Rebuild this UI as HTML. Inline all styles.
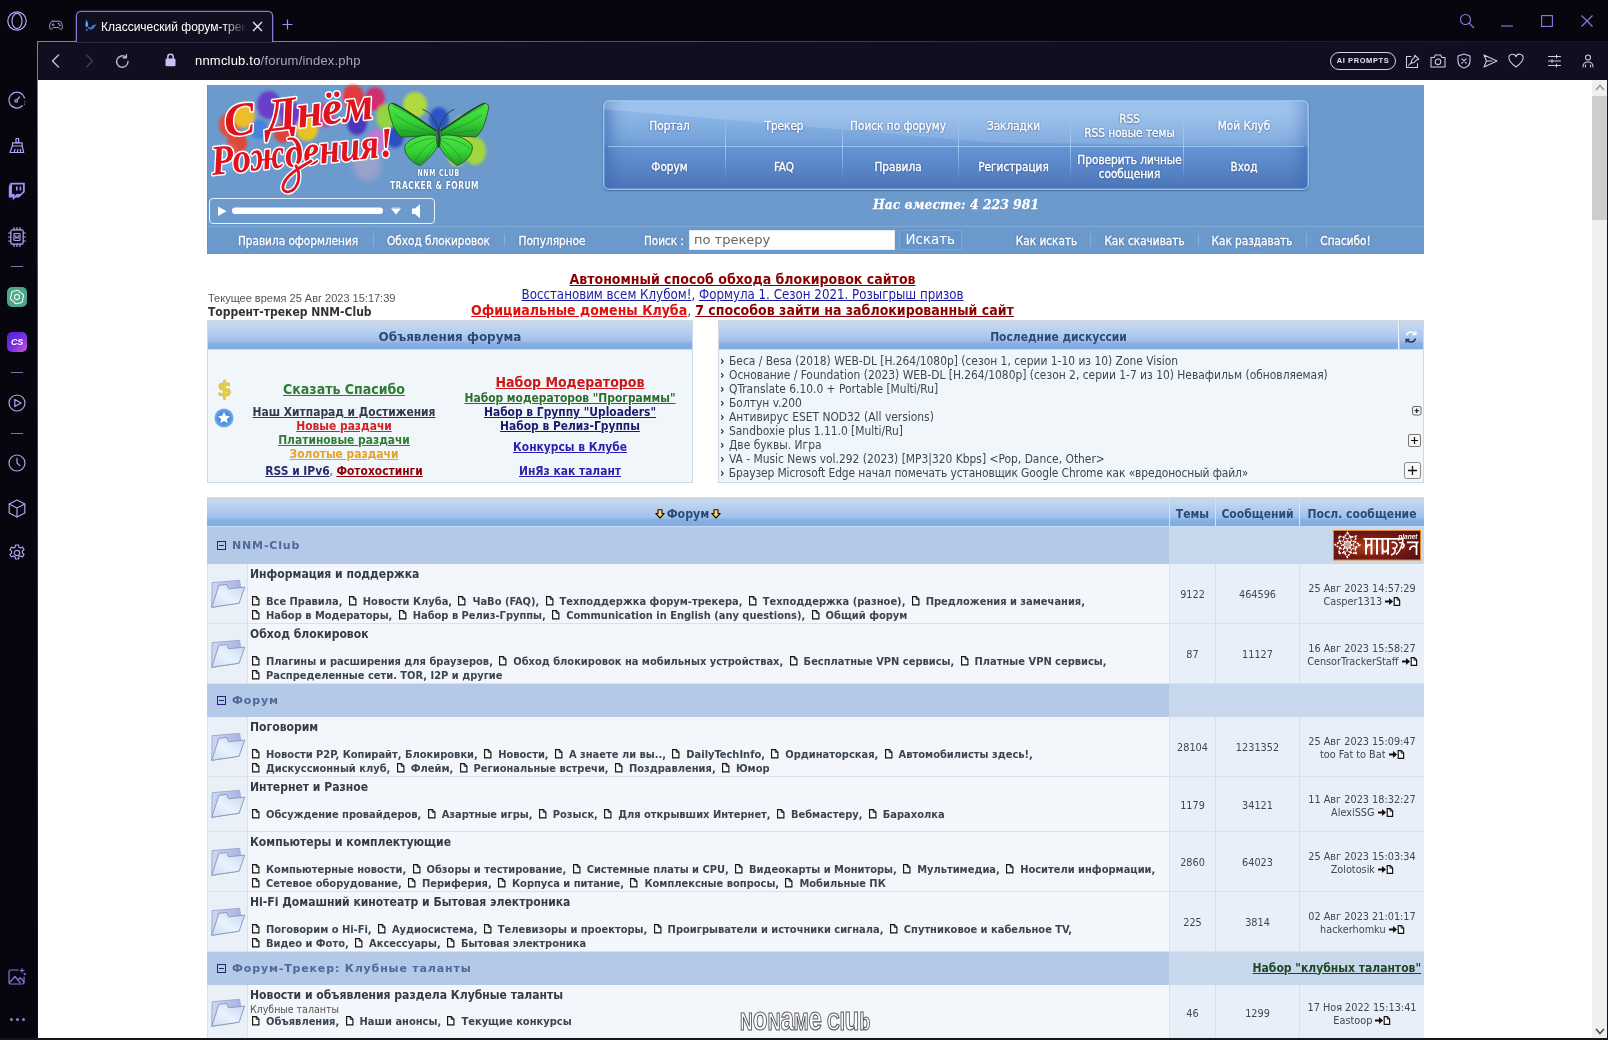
<!DOCTYPE html>
<html lang="ru">
<head>
<meta charset="utf-8">
<title>Классический форум-трекер</title>
<style>
*{box-sizing:border-box;margin:0;padding:0}
html,body{width:1608px;height:1040px;overflow:hidden;background:#fff}
body{position:relative;font-family:"DejaVu Sans Condensed","DejaVu Sans","Liberation Sans",sans-serif;font-size:11px;color:#333}
.abs{position:absolute}
a{text-decoration:underline;color:inherit}
.ver{font-family:"DejaVu Sans","Liberation Sans",sans-serif}
.lib{font-family:"Liberation Sans",sans-serif}
svg{display:block;overflow:visible}
/* ---------- browser chrome ---------- */
#side{left:0;top:0;width:38px;height:1040px;background:#07050e}
#tabbar{left:38px;top:0;width:1570px;height:42px;background:#07050e}
#addr{left:38px;top:42px;width:1570px;height:38px;background:#110e1f}
#tab{left:76px;top:11px;width:197px;height:31px;background:#110e1f;border:1px solid #8876d4;box-shadow:0 0 0 .3px #8876d4;border-bottom:none;border-radius:5px 5px 0 0}
#tabtitle{left:101px;top:19px;width:145px;height:16px;overflow:hidden;white-space:nowrap;color:#fff;font:12px/16px "Liberation Sans",sans-serif;-webkit-mask-image:linear-gradient(90deg,#000 85%,transparent 100%);mask-image:linear-gradient(90deg,#000 85%,transparent 100%)}
#url{left:195px;top:53px;font:13px/16px "Liberation Sans",sans-serif;color:#fff;white-space:nowrap;letter-spacing:.2px}
#url span{color:#a9a4bb}
#aip{left:1330px;top:52px;width:66px;height:18px;border:1px solid #d6cff0;border-radius:9px;color:#e6e0fa;font:bold 7.5px/16px "Liberation Sans",sans-serif;letter-spacing:.6px;text-align:center}
.ic{position:absolute;fill:none;stroke:#b3a2f0;stroke-width:1.2;stroke-linecap:round;stroke-linejoin:round}
.ic2{position:absolute;fill:none;stroke:#d4cbf2;stroke-width:1.05;stroke-linecap:round;stroke-linejoin:round}
.wc{position:absolute;fill:none;stroke:#8f7de6;stroke-width:1.1}
.sep{position:absolute;left:11px;width:12px;height:1px;background:#7d72a8}
#botline{left:0;top:1038px;width:1608px;height:2px;background:#17161c}
#scroll{left:1592px;top:80px;width:16px;height:958px;background:#f0f0f0;border-right:1px solid #15131d}
#thumb{left:1592px;top:96px;width:15px;height:123.500px;background:#cdcdcd}
/* ---------- page header ---------- */
#hdr{left:207px;top:85px;width:1217px;height:169px;border-left:1px solid #6791bf;background:#6c9acc}
#navp{left:603px;top:100px;width:706px;height:90px;border-radius:6px;border:1px solid #93bfee;background:linear-gradient(180deg,#93bdea 0%,#86b2e4 22%,#75a2da 46%,#6592d1 54%,#5986c8 75%,#4d77ba 100%);box-shadow:0 1px 2px rgba(40,70,120,.55),inset 0 0 0 1px rgba(170,205,245,.35),inset 16px 0 16px -10px rgba(62,104,176,.75),inset -16px 0 16px -10px rgba(62,104,176,.75);overflow:hidden}
#navp .gl{position:absolute;left:0;top:0;width:706px;height:46px;background:linear-gradient(180deg,rgba(215,235,252,.26),rgba(200,225,250,.16));clip-path:polygon(0 0,100% 0,100% 100%,55% 90%,0 18%)}
.nv{position:absolute;width:1px;top:14px;height:64px;background:linear-gradient(180deg,rgba(170,205,245,0),rgba(170,205,245,.9) 50%,rgba(150,190,235,0))}
.nh{position:absolute;left:4px;width:696px;top:45px;height:1px;background:rgba(160,200,245,.85)}
.nt{position:absolute;color:#fff;-webkit-text-stroke:.35px #fff;font-size:11.700px;line-height:14px;text-align:center;white-space:nowrap;transform:translate(-50%,-50%);text-shadow:0 0 2px rgba(40,70,130,.9),0 1px 1px rgba(40,70,130,.5)}
#together{left:956px;top:194px;transform:translateX(-50%);white-space:nowrap;color:#fff;font:italic bold 13.800px/20px "DejaVu Serif Condensed","DejaVu Serif","Liberation Serif",serif;text-shadow:0 0 1px #3c64a0;-webkit-text-stroke:.3px #fff}
#player{left:209px;top:198px;width:226px;height:26px;border:1px solid #eaf2fb;border-radius:4px}
#menubar{left:208px;top:226px;width:1216px;height:28px;border-top:1px solid #80abd9;background:#6b99cb}
.mi{position:absolute;top:234px;color:#fff;-webkit-text-stroke:.35px #fff;font-size:11.700px;line-height:14px;white-space:nowrap;transform:translateX(-50%);text-shadow:0 0 2px rgba(40,70,130,.8)}
.ms{position:absolute;top:229px;width:1px;height:22px;background:linear-gradient(180deg,rgba(150,190,235,0),rgba(150,190,235,.8) 50%,rgba(150,190,235,0))}
#sinp{left:689px;top:230px;width:206px;height:20px;background:#fff;border:1px solid #dfe8f3;color:#666;font:13px/17px "DejaVu Sans",sans-serif;padding-left:4px}
#sbtn{left:898.500px;top:230px;width:63.500px;height:20px;border:1px solid #79a6d9;color:#fff;font:13.400px/17px "DejaVu Sans",sans-serif;text-align:center;background:#6794c9}
/* ---------- middle ---------- */
.ctr{position:absolute;white-space:nowrap;transform:translateX(-50%);font-weight:bold}
.bx{position:absolute;background:#f1f6fb;border:1px solid #cfd9e6}
.bh{position:absolute;left:0;top:0;right:0;height:29px;background:linear-gradient(180deg,#cdd9e8 0%,#c0d6ef 20%,#a9c6ee 58%,#a1c0ec 70%,#87b0e3 80%,#81aadf 100%);border-bottom:1px solid #c6ddfb;color:#2b4a78;text-align:center;font:bold 12px/32px "DejaVu Sans",sans-serif}
.dl{position:absolute;left:720px;white-space:nowrap;font-size:11.900px;line-height:14px;color:#3e4852}
.dl b{margin-right:1.200px;color:#2a323a}
.plus{position:absolute;background:linear-gradient(180deg,#fff,#e4e4e4);border:1px solid #555;border-radius:2px;box-shadow:1px 1px 0 #bbb}
.plus:before,.plus:after{content:"";position:absolute;background:#111}
/* ---------- forum table ---------- */
.fh{position:absolute;top:497px;height:29px;background:linear-gradient(180deg,#cdd9e8 0%,#c0d6ef 20%,#a9c6ee 58%,#a1c0ec 70%,#87b0e3 80%,#81aadf 100%);color:#2b4a78;text-align:center;font-weight:bold;font-size:12px;line-height:34px;white-space:nowrap}
.fh .ver{font-size:11px}
.cl{position:absolute;left:207px;width:962px;background:#b4c9e7}
.cr{position:absolute;left:1169px;width:255px;background:#c8d8ec}
.cbx{position:absolute;left:217px;width:9px;height:9px;border:1px solid #23236e}
.cbx:after{content:"";position:absolute;left:1px;top:3px;width:5px;height:1px;background:#23236e}
.ct{position:absolute;left:232px;font-weight:bold;font-size:11px;line-height:15px;letter-spacing:.85px;color:#4d6a99;white-space:nowrap}
.ri{position:absolute;left:208px;width:39px;background:#eaf0f8}
.rf{position:absolute;left:248px;width:921px;background:#f3f6fb}
.rn{position:absolute;background:#e9eff8}
.ft{position:absolute;left:250px;font-weight:bold;font-size:12.050px;line-height:15px;color:#323c46;white-space:nowrap}
.sl{position:absolute;left:252px;font-weight:bold;font-size:11px;line-height:14px;color:#3a4550;white-space:nowrap;word-spacing:0}
.sl a{text-decoration:none}
.pg{display:inline-block;vertical-align:-.5px;margin:0 6.500px 0 2.900px}
.sl .pg:first-child{margin-left:0}
.arr{display:inline-block;vertical-align:-1px}
.num{position:absolute;text-align:center;font-size:10.800px;line-height:14px;color:#3e4852;white-space:nowrap}
#wm{left:739px;top:1008px}
</style>
</head>
<body>
<div id="root" style="position:absolute;left:0;top:0;width:1608px;height:1040px;will-change:transform;overflow:hidden">
<!-- ================= browser chrome ================= -->
<div id="side" class="abs"></div>
<div id="tabbar" class="abs"></div>
<div id="addr" class="abs"></div>
<div id="tab" class="abs"></div>
<div class="abs" style="left:38px;top:41px;width:39px;height:1px;background:#8876d4"></div>
<div class="abs" style="left:273px;top:41px;width:1335px;height:1px;background:linear-gradient(90deg,#8876d4 0%,#5a4aa4 20%,#2a2250 60%,#15122a 100%)"></div>
<div class="abs" style="left:37px;top:41px;width:1px;height:997px;background:linear-gradient(180deg,#8876d4 0%,#5443a0 25%,#2a2158 65%,#0e0b1c 100%)"></div>
<!-- sidebar icons -->
<svg class="ic" style="left:7px;top:11px" width="20" height="20" viewBox="0 0 20 20"><circle cx="10" cy="10" r="9.2"/><ellipse cx="10" cy="10" rx="5" ry="7.6"/></svg>
<svg class="ic" style="left:8px;top:91px" width="18" height="18" viewBox="0 0 18 18"><path d="M14.5 14.8A8 8 0 1 1 16.6 7"/><circle cx="8.2" cy="9.8" r="1.3"/><path d="M9.2 8.8L11.5 6"/><path d="M17 10.5v.1M16.6 13v.1" stroke-dasharray="0.1 2"/></svg>
<svg class="ic" style="left:9px;top:137px" width="17" height="17" viewBox="0 0 17 17"><path d="M7 1.5h2.6v4.2H7z"/><path d="M3.5 5.8h9.6v3.2H3.500z"/><path d="M3.200 9L1 15.500h13.700L13.200 9"/><path d="M5.200 15.300l.8-3M8.300 15.300l.5-3M11.400 15.300l.2-3"/></svg>
<svg class="abs" style="left:8px;top:182px" width="18" height="19" viewBox="0 0 18 19"><path d="M2.600 .8L.8 4.600v11h4v2.600l2.800-2.600h3.400L16.800 10V.8z" fill="#a98cf5"/><path d="M4 2.400h11v7l-2.600 2.600H8.800L6.600 14v-2H4z" fill="#07050e"/><path d="M8 4.600h1.600v3.800H8zM11.600 4.600h1.600v3.800h-1.600z" fill="#a98cf5"/></svg>
<svg class="ic" style="left:8px;top:227px" width="18" height="20" viewBox="0 0 18 20" stroke-width="1.200"><rect x="2.800" y="2.800" width="12.400" height="14.400" rx="2"/><rect x="6" y="6.500" width="6" height="7" rx=".8"/><path d="M7.800 8.500v3l1.200-1.600 1.200 1.600v-3" stroke-width="1"/><path d="M.6 6h2.200M.6 10h2.200M.6 14h2.200M15.200 6h2.200M15.200 10h2.200M15.200 14h2.200M6 .6v2.200M9 .6v2.200M12 .6v2.200M6 17.200v2.200M9 17.200v2.200M12 17.200v2.200"/></svg>
<div class="sep" style="top:266px"></div>
<div class="abs" style="left:7px;top:287px;width:20px;height:20px;border-radius:5px;background:#4ea689"></div>
<svg class="abs" style="left:9px;top:289px;fill:none;stroke:#f2fbf7;stroke-width:1.100" width="16" height="16" viewBox="0 0 16 16"><path d="M8 1.200a3 3 0 0 1 3 2.200l2 1.200a3 3 0 0 1 .6 4.800v2a3 3 0 0 1-3.600 2.600L8 14.800a3 3 0 0 1-3-2.200l-2-1.200a3 3 0 0 1-.6-4.800v-2A3 3 0 0 1 6 2z"/><path d="M5.600 6.600L8 5.200l2.400 1.400v2.800L8 10.800 5.600 9.400z"/></svg>
<div class="abs" style="left:7px;top:332px;width:20px;height:20px;border-radius:5px;background:linear-gradient(135deg,#4a22d8 0%,#7a30e0 55%,#d659d0 100%);color:#fff;font:italic bold 9px/20px 'Liberation Sans',sans-serif;text-align:center;letter-spacing:-.3px">CS</div>
<div class="sep" style="top:372px"></div>
<svg class="ic" style="left:8px;top:394px" width="18" height="18" viewBox="0 0 18 18"><circle cx="9" cy="9" r="8"/><path d="M6.800 5.400v7.200L13 9z"/></svg>
<div class="sep" style="top:433px"></div>
<svg class="ic" style="left:8px;top:454px" width="18" height="18" viewBox="0 0 18 18"><circle cx="9" cy="9" r="8"/><path d="M9 4.400V9l2.800 2.600"/></svg>
<svg class="ic" style="left:8px;top:499px" width="18" height="19" viewBox="0 0 18 19"><path d="M9 1L1.200 5v9L9 18l7.800-4V5z"/><path d="M1.200 5L9 9l7.800-4M9 9v9"/></svg>
<svg class="ic" style="left:8px;top:544px" width="18" height="18" viewBox="0 0 18 18"><circle cx="9" cy="9" r="2.700"/><path d="M7.600 1h2.800l.5 2.200 1.500.8 2.100-.9 1.500 2.400-1.600 1.600v1.800l1.600 1.600-1.500 2.400-2.100-.9-1.500.8-.5 2.200H7.600l-.5-2.200-1.500-.8-2.100.9L2 10.500l1.600-1.600V7.100L2 5.500l1.500-2.400 2.100.9 1.500-.8z"/></svg>
<svg class="ic" style="left:7px;top:967px;stroke:#8a76dc" width="20" height="20" viewBox="0 0 20 20" stroke-width="1.100"><path d="M11 3H3.500A1.500 1.500 0 0 0 2 4.500v11A1.500 1.500 0 0 0 3.500 17h12a1.500 1.500 0 0 0 1.500-1.500V10"/><path d="M2.500 15.500L8 9.500l5 6M11 13l2.200-2.400L17 15"/><path d="M15 1.500v4M13 3.500h4M17.800 6.300v1.600M17 7.100h1.600" stroke-width="1"/></svg>
<div class="abs" style="left:9.500px;top:1017.500px;width:3px;height:3px;border-radius:2px;background:#8c7fc6;box-shadow:6px 0 #8c7fc6,12px 0 #8c7fc6"></div>
<!-- tab bar -->
<svg class="ic2" style="left:49px;top:20px;stroke:#b0a4dc;stroke-width:1.300" width="14" height="10.500" viewBox="0 0 19 14"><path d="M5 1.500h9c2.600 0 4 3.500 4.200 7.500.1 2.600-1 3.500-2 3.500-1.600 0-2.200-2.500-4-2.500H6.800c-1.800 0-2.400 2.500-4 2.500-1 0-2.100-.9-2-3.500C1 5 2.400 1.500 5 1.500z"/><path d="M5.600 4.800v3M4.100 6.300h3" stroke-width="1.100"/><circle cx="13" cy="5" r=".5"/><circle cx="14.600" cy="7" r=".5"/></svg>
<svg class="abs" style="left:82px;top:18px" width="16" height="16" viewBox="0 0 16 16"><path d="M3.500 1.500c1.800 1 3 3.500 2.600 6-.3 1.500-1.200 2-2 1.300C3 8 3.300 6 3.800 4.500 4 3.500 4 2.500 3.500 1.500z" fill="#5aa0f0"/><path d="M14.500 6.500c-1.600-.4-4 .5-5.400 2.200-.9 1.100-.8 2.200 0 2.500 1.200.4 2.500-.8 3.300-2 .6-1 1.300-2 2.100-2.700z" fill="#3c78e0"/><path d="M6 9.500c.8.3 2 .8 2.800 1.600" stroke="#9cc8ff" stroke-width="1" fill="none"/><path d="M4 10c-.5 1-.3 2.300.6 3 .6.400 1.300 0 1.200-.8C5.700 11.300 5 10.500 4 10z" fill="#2f62c8"/></svg>
<div id="tabtitle" class="abs">Классический форум-трекер NNM-Club</div>
<svg class="abs" style="left:252px;top:21px;fill:none;stroke:#e9e6f5;stroke-width:1.300" width="11" height="11" viewBox="0 0 11 11"><path d="M1 1l9 9M10 1l-9 9"/></svg>
<svg class="abs" style="left:282px;top:19px;fill:none;stroke:#a493ea;stroke-width:1.200" width="11" height="11" viewBox="0 0 11 11"><path d="M5.500 .5v10M.5 5.500h10"/></svg>
<!-- window controls -->
<svg class="wc" style="left:1459px;top:13px" width="16" height="16" viewBox="0 0 16 16"><circle cx="6.500" cy="6.500" r="5"/><path d="M10.200 10.200L15 15"/></svg>
<svg class="wc" style="left:1501px;top:25px" width="12" height="2" viewBox="0 0 12 2"><path d="M0 1h12"/></svg>
<svg class="wc" style="left:1541px;top:15px" width="12" height="12" viewBox="0 0 12 12"><rect x=".6" y=".6" width="10.800" height="10.800"/></svg>
<svg class="wc" style="left:1581px;top:15px" width="12" height="12" viewBox="0 0 12 12"><path d="M.5 .5l11 11M11.500 .5l-11 11"/></svg>
<!-- address bar -->
<svg class="ic2" style="left:51px;top:54px;stroke:#c4bcdc;stroke-width:1.400" width="9" height="14" viewBox="0 0 9 14"><path d="M7.500 1L1.500 7l6 6"/></svg>
<svg class="ic2" style="left:85px;top:54px;stroke:#403a5a;stroke-width:1.400" width="9" height="14" viewBox="0 0 9 14"><path d="M1.500 1l6 6-6 6"/></svg>
<svg class="ic2" style="left:115px;top:54px;stroke:#bcb5d4;stroke-width:1.400" width="15" height="15" viewBox="0 0 15 15"><path d="M13 7.500A5.700 5.700 0 1 1 11 3.200"/><path d="M11.400 .6v3.200H8.200" /></svg>
<svg class="abs" style="left:165px;top:53px" width="11" height="14" viewBox="0 0 11 14"><path d="M2.800 6V4a2.700 2.700 0 0 1 5.400 0v2" fill="none" stroke="#c9bff0" stroke-width="1.500"/><rect x=".5" y="5.600" width="10" height="7.600" rx="1.200" fill="#c9bff0"/></svg>
<div id="url" class="abs">nnmclub.to<span>/forum/index.php</span></div>
<div id="aip" class="abs">AI PROMPTS</div>
<svg class="ic2" style="left:1405px;top:54px" width="15" height="15" viewBox="0 0 15 15"><path d="M6 2.500H1.500v11h11V9.500"/><path d="M9.800 1.200l4 4-2 .6-2.600 2.600-3.200.8.800-3.200 2.600-2.600z"/><path d="M5.800 9.200L3.500 11.500"/></svg>
<svg class="ic2" style="left:1430px;top:54px" width="16" height="14" viewBox="0 0 16 14"><path d="M1 3.500h3.200L5.400 1h5.200l1.200 2.500H15V13H1z"/><circle cx="8" cy="7.800" r="2.800"/></svg>
<svg class="ic2" style="left:1457px;top:53px" width="14" height="16" viewBox="0 0 14 16"><path d="M7 1l6 2v5c0 3.500-2.500 6-6 7-3.500-1-6-3.500-6-7V3z"/><path d="M4.800 5.800l4.400 4.400M9.200 5.800l-4.400 4.400"/></svg>
<svg class="ic2" style="left:1483px;top:54px" width="15" height="14" viewBox="0 0 15 14"><path d="M1 1l13 6-13 6 2.500-6z"/><path d="M3.500 7H9"/></svg>
<svg class="ic2" style="left:1508px;top:54px" width="16" height="14" viewBox="0 0 16 14"><path d="M8 13C4 10 1 7.500 1 4.500A3.300 3.300 0 0 1 8 3a3.300 3.300 0 0 1 7 1.500C15 7.500 12 10 8 13z"/></svg>
<svg class="ic2" style="left:1548px;top:55px" width="13" height="12" viewBox="0 0 13 12"><path d="M.5 1.500h12M.5 6h12M.5 10.500h12M8.500 0v3M4 4.500v3M8.500 9v3"/></svg>
<svg class="ic2" style="left:1582px;top:54px" width="12" height="14" viewBox="0 0 12 14"><circle cx="6" cy="3.500" r="2.500"/><path d="M1 13c0-3.500 2-5 5-5s5 1.500 5 5M3.500 13v-2M8.500 13v-2"/></svg>
<!-- scrollbar -->
<div id="scroll" class="abs"></div>
<div id="thumb" class="abs"></div>
<svg class="abs" style="left:1594.500px;top:84px;fill:none;stroke:#9a9a9a;stroke-width:1.600" width="10" height="7" viewBox="0 0 10 7"><path d="M1 6l4-4.500L9 6"/></svg>
<svg class="abs" style="left:1594.500px;top:1028px;fill:none;stroke:#505050;stroke-width:1.600" width="10" height="7" viewBox="0 0 10 7"><path d="M1 1l4 4.500L9 1"/></svg>
<!-- ================= page header ================= -->
<div id="hdr" class="abs"></div>
<svg class="abs" style="left:207px;top:85px" width="290" height="113" viewBox="0 0 290 113">
<defs>
<filter id="bl" x="-20%" y="-20%" width="140%" height="140%"><feGaussianBlur stdDeviation="1.600"/></filter>
<filter id="bl2" x="-20%" y="-20%" width="140%" height="140%"><feGaussianBlur stdDeviation="3"/></filter>
<linearGradient id="bw" x1="0" y1="0" x2="0" y2="1"><stop offset="0" stop-color="#4ee446"/><stop offset=".55" stop-color="#36d234"/><stop offset="1" stop-color="#1f9a28"/></linearGradient><radialGradient id="gw" cx=".35" cy=".3" r=".7"><stop offset="0" stop-color="#fff" stop-opacity=".75"/><stop offset=".5" stop-color="#fff" stop-opacity="0"/></radialGradient>
</defs>
<g filter="url(#bl)" opacity=".92">
<ellipse cx="22" cy="40" rx="10" ry="12" fill="#f0452c"/><ellipse cx="37" cy="30" rx="11" ry="13" fill="#f7c21a"/>
<ellipse cx="30" cy="58" rx="10" ry="12" fill="#e8402c"/><ellipse cx="14" cy="78" rx="10" ry="13" fill="#4aa0e8" opacity=".7"/>
<ellipse cx="62" cy="20" rx="12" ry="14" fill="#6a38c8"/><ellipse cx="84" cy="30" rx="11" ry="13" fill="#7a2fc0"/>
<ellipse cx="100" cy="44" rx="11" ry="12" fill="#f2c818"/><ellipse cx="118" cy="30" rx="10" ry="12" fill="#d83a8a"/>
<ellipse cx="128" cy="14" rx="10" ry="11" fill="#48a8ea"/><ellipse cx="146" cy="12" rx="11" ry="12" fill="#ee3030"/>
<ellipse cx="168" cy="14" rx="10" ry="12" fill="#d8286a"/><ellipse cx="150" cy="38" rx="10" ry="12" fill="#4a2fb8"/>
<ellipse cx="180" cy="32" rx="11" ry="13" fill="#98d838"/><ellipse cx="208" cy="20" rx="12" ry="13" fill="#b8e030"/>
<ellipse cx="170" cy="56" rx="10" ry="12" fill="#e06ad0" opacity=".8"/><ellipse cx="188" cy="52" rx="9" ry="11" fill="#2848c0"/>
<ellipse cx="232" cy="34" rx="10" ry="12" fill="#2a50c8"/><ellipse cx="256" cy="44" rx="11" ry="13" fill="#f0d020"/>
<ellipse cx="268" cy="66" rx="11" ry="14" fill="#a8dc30"/><ellipse cx="250" cy="70" rx="9" ry="11" fill="#f4e028"/>
<ellipse cx="76" cy="48" rx="9" ry="10" fill="#e83a30"/><ellipse cx="52" cy="44" rx="9" ry="10" fill="#3a78e0" opacity=".8"/>
</g>
<g filter="url(#bl2)" opacity=".35"><ellipse cx="160" cy="80" rx="14" ry="16" fill="#f0b0c8"/><ellipse cx="20" cy="72" rx="10" ry="14" fill="#a0d0f8"/></g>
<!-- greeting text -->
<g font-family="'Liberation Serif','DejaVu Serif',serif" font-style="italic" font-weight="bold" fill="#e0121c" stroke="#fff" stroke-width="3" stroke-linejoin="round" paint-order="stroke" style="paint-order:stroke">
<text x="18" y="43" font-size="47" transform="rotate(-7 90 40)" textLength="150" lengthAdjust="spacingAndGlyphs">С Днём</text>
<text x="5" y="81" font-size="42" transform="rotate(-6 90 80)" textLength="183" lengthAdjust="spacingAndGlyphs">Рождения!</text>
</g>
<path d="M104 76c-10 6-26 14-28 25-1 6 6 8 11 3 6-6 6-17 2-23" fill="none" stroke="#fff" stroke-width="5.500" stroke-linecap="round"/>
<path d="M104 76c-10 6-26 14-28 25-1 6 6 8 11 3 6-6 6-17 2-23" fill="none" stroke="#e0121c" stroke-width="2.800" stroke-linecap="round"/>
<!-- butterfly -->
<g stroke="#1d5c24" stroke-width=".9" stroke-linejoin="round" fill="url(#bw)">
<path d="M229 45.500C214 36 199 24 186 18.500Q180.500 18 181.500 24C184 34 186 45 194 52 204 52 218 50 229 50.500z"/>
<path d="M234 45.500C249 36 264 24 277 18.500Q282.500 18 281.500 24C279 34 277 45 269 52 259 52 245 50 234 50.500z"/>
<path d="M229 50.500C218 48.500 204 52 198 60 196 68 204 78 213 80.500 220 76 228 67 230.500 61z"/>
<path d="M234 50.500C245 48.500 259 52 265 60 267 68 259 78 250 80.500 243 76 235 67 232.500 61z"/>
</g>
<g stroke="#178a20" stroke-width=".7" fill="none" opacity=".85"><path d="M228 46C216 38 202 28 186 21M227 48C214 44 200 38 188 30M226 49C214 48 202 46 193 45M228 53C216 54 206 58 200 64M229 55C220 60 212 68 208 76M230 57C226 64 220 72 215 78M235 46C247 38 261 28 277 21M236 48C249 44 263 38 275 30M237 49C249 48 261 46 270 45M235 53C247 54 257 58 263 64M234 55C243 60 251 68 255 76M233 57C237 64 243 72 248 78"/></g>
<path d="M229 45.500C214 36 199 24 186 18.500M234 45.500C249 36 264 24 277 18.500" stroke="#164a1c" stroke-width="1.500" fill="none" stroke-linecap="round"/>
<path d="M231.500 44.500c.3 6 .3 11 0 17" stroke="#2a4a34" stroke-width="2.600" stroke-linecap="round" fill="none"/>
<path d="M231 44c-2-8-7-17-15-19.500M232 44c2-8 7-17 15-19.500" stroke="#23452c" stroke-width="1" fill="none" stroke-linecap="round"/>
<g font-family="'DejaVu Sans Condensed','Liberation Sans',sans-serif" font-weight="bold" fill="#fff" text-anchor="middle" style="text-shadow:0 0 2px #2c4f8a">
<text x="231.700" y="91" font-size="9" letter-spacing="1" textLength="42.500" lengthAdjust="spacingAndGlyphs">NNM CLUB</text>
<text x="227.500" y="104" font-size="10.800" letter-spacing=".6" textLength="89" lengthAdjust="spacingAndGlyphs">TRACKER &amp; FORUM</text>
</g>
</svg>
<!-- nav panel -->
<div id="navp" class="abs"><div class="gl"></div>
<div class="nv" style="left:121px"></div><div class="nv" style="left:238px"></div><div class="nv" style="left:354px"></div><div class="nv" style="left:466px"></div><div class="nv" style="left:579px"></div>
<div class="nh"></div>
</div>
<div class="nt" style="left:669.500px;top:125.500px">Портал</div>
<div class="nt" style="left:784px;top:125.500px">Трекер</div>
<div class="nt" style="left:898px;top:125.500px">Поиск по форуму</div>
<div class="nt" style="left:1013.500px;top:125.500px">Закладки</div>
<div class="nt" style="left:1129.500px;top:125.500px">RSS<br>RSS новые темы</div>
<div class="nt" style="left:1244px;top:125.500px">Мой Клуб</div>
<div class="nt" style="left:669.500px;top:166.500px">Форум</div>
<div class="nt" style="left:784px;top:166.500px">FAQ</div>
<div class="nt" style="left:898px;top:166.500px">Правила</div>
<div class="nt" style="left:1013.500px;top:166.500px">Регистрация</div>
<div class="nt" style="left:1129.500px;top:166.500px">Проверить личные<br>сообщения</div>
<div class="nt" style="left:1244px;top:166.500px">Вход</div>
<div id="together" class="abs">Нас вместе: 4 223 981</div>
<!-- audio player -->
<div id="player" class="abs"></div>
<svg class="abs" style="left:209px;top:198px" width="226" height="26" viewBox="0 0 226 26"><path d="M9 8.500v9.500l8.500-4.700z" fill="#fff"/><rect x="23" y="9.500" width="151" height="6.500" rx="3.200" fill="#fff"/><path d="M182 10.500h10l-5 6z" fill="#fff"/><path d="M182.500 10h9" stroke="#c8dcf2" stroke-width="1"/><path d="M203 10.500h3l5-4.200v14l-5-4.300h-3z" fill="#fff"/></svg>
<!-- menu bar -->
<div id="menubar" class="abs"></div>
<div class="ms" style="left:373px"></div><div class="ms" style="left:504px"></div><div class="ms" style="left:1090px"></div><div class="ms" style="left:1198px"></div><div class="ms" style="left:1306px"></div>
<div class="mi" style="left:298px">Правила оформления</div>
<div class="mi" style="left:438.500px">Обход блокировок</div>
<div class="mi" style="left:552px">Популярное</div>
<div class="mi" style="left:664px">Поиск :</div>
<div id="sinp" class="abs">по трекеру</div>
<div id="sbtn" class="abs">Искать</div>
<div class="mi" style="left:1046.500px">Как искать</div>
<div class="mi" style="left:1144.500px">Как скачивать</div>
<div class="mi" style="left:1252px">Как раздавать</div>
<div class="mi" style="left:1345.500px">Спасибо!</div>
<!-- ================= announcements ================= -->
<div class="ctr" style="left:742.500px;top:271px;font-size:14px;line-height:17px;color:#8b0000"><a>Автономный способ обхода блокировок сайтов</a></div>
<div class="ctr" style="left:742.500px;top:287px;font-size:13.200px;line-height:16px;color:#1a1aa8;font-weight:normal"><a>Восстановим всем Клубом!</a>, <a>Формула 1. Сезон 2021. Розыгрыш призов</a></div>
<div class="ctr" style="left:742.500px;top:302px;font-size:14px;line-height:17px;color:#555;font-weight:normal"><a style="font-weight:bold;color:#e01010">Официальные домены Клуба</a>, <a style="font-weight:bold;color:#8b0000">7 способов зайти на заблокированный сайт</a></div>
<div class="abs lib" style="left:208px;top:292px;font-size:11px;line-height:13px;color:#555;white-space:nowrap">Текущее время 25 Авг 2023 15:17:39</div>
<div class="abs" style="left:208px;top:305px;font-size:12px;line-height:14px;color:#333;font-weight:bold;white-space:nowrap">Торрент-трекер NNM-Club</div>
<!-- box 1 -->
<div class="bx" style="left:207px;top:320px;width:486px;height:163px"><div class="bh">Объявления форума</div></div>
<svg class="abs" style="left:216px;top:378px" width="17" height="22" viewBox="0 0 17 22"><text x="8.500" y="18" text-anchor="middle" font-family="'DejaVu Sans',sans-serif" font-weight="bold" font-size="21" fill="#e8cf40" stroke="#d2b223" stroke-width=".5">$</text></svg>
<svg class="abs" style="left:214px;top:408px" width="20" height="20" viewBox="0 0 20 20"><circle cx="10" cy="10" r="9.500" fill="#6aa8ea"/><circle cx="10" cy="10" r="7.600" fill="#4d90e0"/><path d="M10 3.800l1.800 4 4.300.4-3.300 2.900 1 4.200L10 13l-3.800 2.300 1-4.200L3.900 8.200l4.300-.4z" fill="#fff"/></svg>
<div class="ctr" style="left:344px;top:380px;font-size:14px;line-height:18px;color:#2e7d32"><a>Сказать Спасибо</a></div>
<div class="ctr" style="left:344px;top:405px;font-size:11.900px;line-height:14px;color:#2f3a4c"><a>Наш Хитпарад и Достижения</a></div>
<div class="ctr" style="left:344px;top:419px;font-size:11.900px;line-height:14px;color:#d82020"><a>Новые раздачи</a></div>
<div class="ctr" style="left:344px;top:433px;font-size:11.900px;line-height:14px;color:#2e7d32"><a>Платиновые раздачи</a></div>
<div class="ctr" style="left:344px;top:447px;font-size:11.900px;line-height:14px;color:#e2a428"><a>Золотые раздачи</a></div>
<div class="ctr" style="left:344px;top:464px;font-size:11.900px;line-height:14px;color:#555;font-weight:normal"><a style="font-weight:bold;color:#2b2b6b">RSS и IPv6</a>, <a style="font-weight:bold;color:#8b0000">Фотохостинги</a></div>
<div class="ctr" style="left:570px;top:373px;font-size:14px;line-height:18px;color:#cc1818"><a>Набор Модераторов</a></div>
<div class="ctr" style="left:570px;top:391px;font-size:11.900px;line-height:14px;color:#2a6e2a"><a>Набор модераторов "Программы"</a></div>
<div class="ctr" style="left:570px;top:405px;font-size:11.900px;line-height:14px;color:#1a1a6e"><a>Набор в Группу "Uploaders"</a></div>
<div class="ctr" style="left:570px;top:419px;font-size:11.900px;line-height:14px;color:#1a1a6e"><a>Набор в Релиз-Группы</a></div>
<div class="ctr" style="left:570px;top:440px;font-size:11.900px;line-height:14px;color:#2a1fb0"><a>Конкурсы в Клубе</a></div>
<div class="ctr" style="left:570px;top:464px;font-size:11.900px;line-height:14px;color:#2a1fb0"><a>ИнЯз как талант</a></div>
<!-- box 2 -->
<div class="bx" style="left:718px;top:320px;width:706px;height:163px"><div class="bh" style="right:25px;font-family:'DejaVu Sans Condensed',sans-serif;font-size:11.900px">Последние дискуссии</div><div class="bh" style="left:680px;border-left:1px solid #b4ccf0"></div></div>
<svg class="abs" style="left:1404px;top:330px;fill:none;stroke-width:1.500" width="14" height="14" viewBox="0 0 14 14"><path d="M11.500 8.500A4.800 4.800 0 0 1 3 10" stroke="#1f3a5f"/><path d="M2.500 5.500A4.800 4.800 0 0 1 11 4" stroke="#fff"/><path d="M11.800 1.200V4.600H8.400" stroke="#fff"/><path d="M2.200 12.800V9.400h3.400" stroke="#1f3a5f"/></svg>
<div class="dl" style="top:354px"><b>›</b> Беса / Besa (2018) WEB-DL [H.264/1080p] (сезон 1, серии 1-10 из 10) Zone Vision</div>
<div class="dl" style="top:368px"><b>›</b> Основание / Foundation (2023) WEB-DL [H.264/1080p] (сезон 2, серии 1-7 из 10) Невафильм (обновляемая)</div>
<div class="dl" style="top:382px"><b>›</b> QTranslate 6.10.0 + Portable [Multi/Ru]</div>
<div class="dl" style="top:396px"><b>›</b> Болтун v.200</div>
<div class="dl" style="top:410px"><b>›</b> Антивирус ESET NOD32 (All versions)</div>
<div class="dl" style="top:424px"><b>›</b> Sandboxie plus 1.11.0 [Multi/Ru]</div>
<div class="dl" style="top:438px"><b>›</b> Две буквы. Игра</div>
<div class="dl" style="top:452px"><b>›</b> VA - Music News vol.292 (2023) [MP3|320 Kbps] &lt;Pop, Dance, Other&gt;</div>
<div class="dl" style="top:466px;letter-spacing:-.1px"><b>›</b> Браузер Microsoft Edge начал помечать установщик Google Chrome как «вредоносный файл»</div>
<svg class="abs" style="left:1412px;top:406px" width="10" height="10" viewBox="0 0 10 10"><rect x=".5" y=".5" width="8.500" height="8.500" rx="1.500" fill="#f4f4f4" stroke="#666"/><path d="M2.500 4.750h4.500M4.750 2.500v4.500" stroke="#111" stroke-width="1.100"/></svg>
<svg class="abs" style="left:1408px;top:434px" width="14" height="14" viewBox="0 0 14 14"><rect x=".5" y=".5" width="12" height="12" rx="1.500" fill="#f6f6f6" stroke="#777"/><path d="M3 6.500h7M6.500 3v7" stroke="#111" stroke-width="1.200"/></svg>
<svg class="abs" style="left:1404px;top:462px" width="18" height="18" viewBox="0 0 18 18"><rect x=".5" y=".5" width="16" height="16" rx="2" fill="#f8f8f8" stroke="#888"/><path d="M4 8.500h9M8.500 4v9" stroke="#111" stroke-width="1.300"/></svg>
<!-- ================= forum table ================= -->
<div class="abs" style="left:207px;top:497px;width:1217px;height:543px;background:#d9e1ec"></div>
<div class="abs" style="left:207px;top:526px;width:1217px;height:1px;background:#c6ddfb"></div>
<div class="fh" style="left:207px;width:962px"><span style="font-size:12.300px">Форум</span></div>
<div class="fh" style="left:1170px;width:45px">Темы</div>
<div class="fh" style="left:1216px;width:83px">Сообщений</div>
<div class="fh" style="left:1300px;width:124px">Посл. сообщение</div>
<svg class="abs" style="left:655px;top:509px" width="10" height="10" viewBox="0 0 10 10"><path d="M3 .8h4v3.700h2.200L5 9 .8 4.500H3z" fill="#ffd566" stroke="#1a1206" stroke-width="1.100" stroke-linejoin="round"/></svg>
<svg class="abs" style="left:711px;top:509px" width="10" height="10" viewBox="0 0 10 10"><path d="M3 .8h4v3.700h2.200L5 9 .8 4.500H3z" fill="#ffd566" stroke="#1a1206" stroke-width="1.100" stroke-linejoin="round"/></svg>
<div class="cl" style="top:527px;height:37px"></div><div class="cr" style="top:527px;height:37px"></div>
<div class="cbx" style="top:540.5px"></div>
<div class="ct ver" style="top:537.5px">NNM-Club</div>
<svg class="abs" style="left:1333px;top:530px" width="88" height="31" viewBox="0 0 88 31"><defs><radialGradient id="bg1" cx=".42" cy=".55" r=".75"><stop offset="0" stop-color="#b8481c"/><stop offset=".45" stop-color="#7e1c12"/><stop offset="1" stop-color="#4a0d0d"/></radialGradient></defs><rect x=".5" y=".5" width="87" height="29.500" fill="url(#bg1)" stroke="#e0862c"/><g fill="none" stroke="#fff" stroke-linejoin="miter"><polygon points="14.4,2.6 17.5,7.3 23.1,6.2 22.0,11.8 26.7,14.9 22.0,18.0 23.1,23.6 17.5,22.5 14.4,27.2 11.3,22.5 5.7,23.6 6.8,18.0 2.1,14.9 6.8,11.8 5.7,6.2 11.3,7.3" stroke-width="1.600" stroke-dasharray="2.200 1"/><polygon points="17.7,7.0 18.4,10.9 22.3,11.6 20.0,14.9 22.3,18.2 18.4,18.9 17.7,22.8 14.4,20.5 11.1,22.8 10.4,18.9 6.5,18.2 8.8,14.9 6.5,11.6 10.4,10.9 11.1,7.0 14.4,9.3" stroke-width="1.300" stroke-dasharray="1.600 .9"/><polygon points="14.4,9.9 15.5,12.1 17.9,11.4 17.2,13.8 19.4,14.9 17.2,16.0 17.9,18.4 15.5,17.7 14.4,19.9 13.3,17.7 10.9,18.4 11.6,16.0 9.4,14.9 11.6,13.8 10.9,11.4 13.3,12.1" stroke-width="1" fill="#fff" fill-opacity=".55"/></g><g fill="none" stroke="#fff" stroke-width="2"><path d="M30.500 8.800h40" stroke-width="1.700"/><path d="M33 9v15.500M38.500 9v15.500M38.500 15c-2.500-1-5 .5-5 3"/><path d="M44 9v15.500M49.500 9v15.500M55 9v15.500M55 19.500c-2 3-5.500 3-5.500-1"/><path d="M58.500 12.500c3-1 5.500.5 5.500 3 0 2.200-2.500 3.200-4.500 2.800 4 0 3.500 5-1.500 6.700" stroke-width="1.600"/><path d="M66 12.500c5 0 7 3 3 6M70 9.500c-1 7-3 12-7 15" stroke-width="1.600"/><path d="M74 12.300h11.500M83.500 12.500v12.500M83.500 17.500c-2.500-2.500-7-1-6.500 2.500" stroke-width="1.800"/></g><text x="84.500" y="8.600" text-anchor="end" font-family="Liberation Sans,sans-serif" font-weight="bold" font-style="italic" font-size="6.500" fill="#fff">planet</text></svg>
<div class="ri" style="top:564px;height:59px"></div><div class="rf" style="top:564px;height:59px"></div><div class="rn" style="top:564px;height:59px;left:1170px;width:45px"></div><div class="rn" style="top:564px;height:59px;left:1216px;width:83px"></div><div class="rn" style="top:564px;height:59px;left:1300px;width:124px"></div>
<svg class="abs" style="left:210px;top:579px" width="37" height="30" viewBox="0 0 37 30"><defs><linearGradient id="fg0" x1="0" y1="1" x2="1" y2="0"><stop offset="0" stop-color="#cfdcf4"/><stop offset=".45" stop-color="#e8f3fd"/><stop offset="1" stop-color="#c6d6f2"/></linearGradient><linearGradient id="fb0" x1="0" y1="0" x2="1" y2="0"><stop offset="0" stop-color="#cdd6f3"/><stop offset="1" stop-color="#a9b2e4"/></linearGradient></defs><path d="M2.200 3.700L29.600 1.300l1 7.300-1.500 15.600L1.700 28.300z" fill="url(#fb0)" stroke="#9ba7cc" stroke-width=".9" stroke-linejoin="round"/><path d="M1.700 28.300L8.900 6.400l7.700-1 2 4.400 16.100-1.700-5.600 16.100z" fill="url(#fg0)" stroke="#8f9cbe" stroke-width="1" stroke-linejoin="round"/></svg>
<div class="ft" style="top:567px">Информация и поддержка</div>
<div class="sl" style="top:595px"><svg class="pg" width="7.500" height="9.500" viewBox="0 0 7.500 9.500"><path d="M.6 .6h3.700L6.900 3.200v5.600H.6z" fill="#fff" stroke="#111" stroke-width="1.150"/><path d="M4.200 .6v2.700h2.700" fill="none" stroke="#111" stroke-width=".9"/></svg><a>Все Правила</a>, <svg class="pg" width="7.500" height="9.500" viewBox="0 0 7.500 9.500"><path d="M.6 .6h3.700L6.900 3.200v5.600H.6z" fill="#fff" stroke="#111" stroke-width="1.150"/><path d="M4.200 .6v2.700h2.700" fill="none" stroke="#111" stroke-width=".9"/></svg><a>Новости Клуба</a>, <svg class="pg" width="7.500" height="9.500" viewBox="0 0 7.500 9.500"><path d="M.6 .6h3.700L6.900 3.200v5.600H.6z" fill="#fff" stroke="#111" stroke-width="1.150"/><path d="M4.200 .6v2.700h2.700" fill="none" stroke="#111" stroke-width=".9"/></svg><a>ЧаВо (FAQ)</a>, <svg class="pg" width="7.500" height="9.500" viewBox="0 0 7.500 9.500"><path d="M.6 .6h3.700L6.900 3.200v5.600H.6z" fill="#fff" stroke="#111" stroke-width="1.150"/><path d="M4.200 .6v2.700h2.700" fill="none" stroke="#111" stroke-width=".9"/></svg><a>Техподдержка форум-трекера</a>, <svg class="pg" width="7.500" height="9.500" viewBox="0 0 7.500 9.500"><path d="M.6 .6h3.700L6.900 3.200v5.600H.6z" fill="#fff" stroke="#111" stroke-width="1.150"/><path d="M4.200 .6v2.700h2.700" fill="none" stroke="#111" stroke-width=".9"/></svg><a>Техподдержка (разное)</a>, <svg class="pg" width="7.500" height="9.500" viewBox="0 0 7.500 9.500"><path d="M.6 .6h3.700L6.900 3.200v5.600H.6z" fill="#fff" stroke="#111" stroke-width="1.150"/><path d="M4.200 .6v2.700h2.700" fill="none" stroke="#111" stroke-width=".9"/></svg><a>Предложения и замечания</a>,</div>
<div class="sl" style="top:609px"><svg class="pg" width="7.500" height="9.500" viewBox="0 0 7.500 9.500"><path d="M.6 .6h3.700L6.900 3.200v5.600H.6z" fill="#fff" stroke="#111" stroke-width="1.150"/><path d="M4.200 .6v2.700h2.700" fill="none" stroke="#111" stroke-width=".9"/></svg><a>Набор в Модераторы</a>, <svg class="pg" width="7.500" height="9.500" viewBox="0 0 7.500 9.500"><path d="M.6 .6h3.700L6.900 3.200v5.600H.6z" fill="#fff" stroke="#111" stroke-width="1.150"/><path d="M4.200 .6v2.700h2.700" fill="none" stroke="#111" stroke-width=".9"/></svg><a>Набор в Релиз-Группы</a>, <svg class="pg" width="7.500" height="9.500" viewBox="0 0 7.500 9.500"><path d="M.6 .6h3.700L6.900 3.200v5.600H.6z" fill="#fff" stroke="#111" stroke-width="1.150"/><path d="M4.200 .6v2.700h2.700" fill="none" stroke="#111" stroke-width=".9"/></svg><a>Communication in English (any questions)</a>, <svg class="pg" width="7.500" height="9.500" viewBox="0 0 7.500 9.500"><path d="M.6 .6h3.700L6.900 3.200v5.600H.6z" fill="#fff" stroke="#111" stroke-width="1.150"/><path d="M4.200 .6v2.700h2.700" fill="none" stroke="#111" stroke-width=".9"/></svg><a>Общий форум</a></div>
<div class="num" style="left:1170px;width:45px;top:588.0px">9122</div>
<div class="num" style="left:1216px;width:83px;top:588.0px">464596</div>
<div class="num" style="left:1300px;width:124px;top:582.0px;line-height:13px">25 Авг 2023 14:57:29<br>Casper1313 <svg class="arr" width="15.300" height="9" viewBox="0 0 17 10"><path d="M0 4h4.500V1.200L9 5 4.500 8.800V6H0z" fill="#111"/><path d="M10.250 .75h3.500L16.250 3.250v6H10.250z" fill="#fff" stroke="#111" stroke-width="1.300"/><path d="M13.500 .75v2.750h2.750" fill="none" stroke="#111" stroke-width="1"/></svg></div>
<div class="ri" style="top:624px;height:59px"></div><div class="rf" style="top:624px;height:59px"></div><div class="rn" style="top:624px;height:59px;left:1170px;width:45px"></div><div class="rn" style="top:624px;height:59px;left:1216px;width:83px"></div><div class="rn" style="top:624px;height:59px;left:1300px;width:124px"></div>
<svg class="abs" style="left:210px;top:639px" width="37" height="30" viewBox="0 0 37 30"><defs><linearGradient id="fg1" x1="0" y1="1" x2="1" y2="0"><stop offset="0" stop-color="#cfdcf4"/><stop offset=".45" stop-color="#e8f3fd"/><stop offset="1" stop-color="#c6d6f2"/></linearGradient><linearGradient id="fb1" x1="0" y1="0" x2="1" y2="0"><stop offset="0" stop-color="#cdd6f3"/><stop offset="1" stop-color="#a9b2e4"/></linearGradient></defs><path d="M2.200 3.700L29.600 1.300l1 7.300-1.500 15.600L1.700 28.300z" fill="url(#fb1)" stroke="#9ba7cc" stroke-width=".9" stroke-linejoin="round"/><path d="M1.700 28.300L8.900 6.400l7.700-1 2 4.400 16.100-1.700-5.600 16.100z" fill="url(#fg1)" stroke="#8f9cbe" stroke-width="1" stroke-linejoin="round"/></svg>
<div class="ft" style="top:627px">Обход блокировок</div>
<div class="sl" style="top:655px"><svg class="pg" width="7.500" height="9.500" viewBox="0 0 7.500 9.500"><path d="M.6 .6h3.700L6.900 3.200v5.600H.6z" fill="#fff" stroke="#111" stroke-width="1.150"/><path d="M4.200 .6v2.700h2.700" fill="none" stroke="#111" stroke-width=".9"/></svg><a>Плагины и расширения для браузеров</a>, <svg class="pg" width="7.500" height="9.500" viewBox="0 0 7.500 9.500"><path d="M.6 .6h3.700L6.900 3.200v5.600H.6z" fill="#fff" stroke="#111" stroke-width="1.150"/><path d="M4.200 .6v2.700h2.700" fill="none" stroke="#111" stroke-width=".9"/></svg><a>Обход блокировок на мобильных устройствах</a>, <svg class="pg" width="7.500" height="9.500" viewBox="0 0 7.500 9.500"><path d="M.6 .6h3.700L6.900 3.200v5.600H.6z" fill="#fff" stroke="#111" stroke-width="1.150"/><path d="M4.200 .6v2.700h2.700" fill="none" stroke="#111" stroke-width=".9"/></svg><a>Бесплатные VPN сервисы</a>, <svg class="pg" width="7.500" height="9.500" viewBox="0 0 7.500 9.500"><path d="M.6 .6h3.700L6.900 3.200v5.600H.6z" fill="#fff" stroke="#111" stroke-width="1.150"/><path d="M4.200 .6v2.700h2.700" fill="none" stroke="#111" stroke-width=".9"/></svg><a>Платные VPN сервисы</a>,</div>
<div class="sl" style="top:669px"><svg class="pg" width="7.500" height="9.500" viewBox="0 0 7.500 9.500"><path d="M.6 .6h3.700L6.900 3.200v5.600H.6z" fill="#fff" stroke="#111" stroke-width="1.150"/><path d="M4.200 .6v2.700h2.700" fill="none" stroke="#111" stroke-width=".9"/></svg><a>Распределенные сети. TOR, I2P и другие</a></div>
<div class="num" style="left:1170px;width:45px;top:648.0px">87</div>
<div class="num" style="left:1216px;width:83px;top:648.0px">11127</div>
<div class="num" style="left:1300px;width:124px;top:642.0px;line-height:13px">16 Авг 2023 15:58:27<br>CensorTrackerStaff <svg class="arr" width="15.300" height="9" viewBox="0 0 17 10"><path d="M0 4h4.500V1.200L9 5 4.500 8.800V6H0z" fill="#111"/><path d="M10.250 .75h3.500L16.250 3.250v6H10.250z" fill="#fff" stroke="#111" stroke-width="1.300"/><path d="M13.500 .75v2.750h2.750" fill="none" stroke="#111" stroke-width="1"/></svg></div>
<div class="cl" style="top:684px;height:33px"></div><div class="cr" style="top:684px;height:33px"></div>
<div class="cbx" style="top:695.5px"></div>
<div class="ct ver" style="top:692.5px">Форум</div>
<div class="ri" style="top:717px;height:59px"></div><div class="rf" style="top:717px;height:59px"></div><div class="rn" style="top:717px;height:59px;left:1170px;width:45px"></div><div class="rn" style="top:717px;height:59px;left:1216px;width:83px"></div><div class="rn" style="top:717px;height:59px;left:1300px;width:124px"></div>
<svg class="abs" style="left:210px;top:732px" width="37" height="30" viewBox="0 0 37 30"><defs><linearGradient id="fg2" x1="0" y1="1" x2="1" y2="0"><stop offset="0" stop-color="#cfdcf4"/><stop offset=".45" stop-color="#e8f3fd"/><stop offset="1" stop-color="#c6d6f2"/></linearGradient><linearGradient id="fb2" x1="0" y1="0" x2="1" y2="0"><stop offset="0" stop-color="#cdd6f3"/><stop offset="1" stop-color="#a9b2e4"/></linearGradient></defs><path d="M2.200 3.700L29.600 1.300l1 7.300-1.500 15.600L1.700 28.300z" fill="url(#fb2)" stroke="#9ba7cc" stroke-width=".9" stroke-linejoin="round"/><path d="M1.700 28.300L8.900 6.400l7.700-1 2 4.400 16.100-1.700-5.600 16.100z" fill="url(#fg2)" stroke="#8f9cbe" stroke-width="1" stroke-linejoin="round"/></svg>
<div class="ft" style="top:720px">Поговорим</div>
<div class="sl" style="top:748px"><svg class="pg" width="7.500" height="9.500" viewBox="0 0 7.500 9.500"><path d="M.6 .6h3.700L6.900 3.200v5.600H.6z" fill="#fff" stroke="#111" stroke-width="1.150"/><path d="M4.200 .6v2.700h2.700" fill="none" stroke="#111" stroke-width=".9"/></svg><a>Новости P2P, Копирайт, Блокировки</a>, <svg class="pg" width="7.500" height="9.500" viewBox="0 0 7.500 9.500"><path d="M.6 .6h3.700L6.900 3.200v5.600H.6z" fill="#fff" stroke="#111" stroke-width="1.150"/><path d="M4.200 .6v2.700h2.700" fill="none" stroke="#111" stroke-width=".9"/></svg><a>Новости</a>, <svg class="pg" width="7.500" height="9.500" viewBox="0 0 7.500 9.500"><path d="M.6 .6h3.700L6.900 3.200v5.600H.6z" fill="#fff" stroke="#111" stroke-width="1.150"/><path d="M4.200 .6v2.700h2.700" fill="none" stroke="#111" stroke-width=".9"/></svg><a>А знаете ли вы..</a>, <svg class="pg" width="7.500" height="9.500" viewBox="0 0 7.500 9.500"><path d="M.6 .6h3.700L6.900 3.200v5.600H.6z" fill="#fff" stroke="#111" stroke-width="1.150"/><path d="M4.200 .6v2.700h2.700" fill="none" stroke="#111" stroke-width=".9"/></svg><a>DailyTechInfo</a>, <svg class="pg" width="7.500" height="9.500" viewBox="0 0 7.500 9.500"><path d="M.6 .6h3.700L6.900 3.200v5.600H.6z" fill="#fff" stroke="#111" stroke-width="1.150"/><path d="M4.200 .6v2.700h2.700" fill="none" stroke="#111" stroke-width=".9"/></svg><a>Ординаторская</a>, <svg class="pg" width="7.500" height="9.500" viewBox="0 0 7.500 9.500"><path d="M.6 .6h3.700L6.900 3.200v5.600H.6z" fill="#fff" stroke="#111" stroke-width="1.150"/><path d="M4.200 .6v2.700h2.700" fill="none" stroke="#111" stroke-width=".9"/></svg><a>Автомобилисты здесь!</a>,</div>
<div class="sl" style="top:762px"><svg class="pg" width="7.500" height="9.500" viewBox="0 0 7.500 9.500"><path d="M.6 .6h3.700L6.900 3.200v5.600H.6z" fill="#fff" stroke="#111" stroke-width="1.150"/><path d="M4.200 .6v2.700h2.700" fill="none" stroke="#111" stroke-width=".9"/></svg><a>Дискуссионный клуб</a>, <svg class="pg" width="7.500" height="9.500" viewBox="0 0 7.500 9.500"><path d="M.6 .6h3.700L6.900 3.200v5.600H.6z" fill="#fff" stroke="#111" stroke-width="1.150"/><path d="M4.200 .6v2.700h2.700" fill="none" stroke="#111" stroke-width=".9"/></svg><a>Флейм</a>, <svg class="pg" width="7.500" height="9.500" viewBox="0 0 7.500 9.500"><path d="M.6 .6h3.700L6.900 3.200v5.600H.6z" fill="#fff" stroke="#111" stroke-width="1.150"/><path d="M4.200 .6v2.700h2.700" fill="none" stroke="#111" stroke-width=".9"/></svg><a>Региональные встречи</a>, <svg class="pg" width="7.500" height="9.500" viewBox="0 0 7.500 9.500"><path d="M.6 .6h3.700L6.900 3.200v5.600H.6z" fill="#fff" stroke="#111" stroke-width="1.150"/><path d="M4.200 .6v2.700h2.700" fill="none" stroke="#111" stroke-width=".9"/></svg><a>Поздравления</a>, <svg class="pg" width="7.500" height="9.500" viewBox="0 0 7.500 9.500"><path d="M.6 .6h3.700L6.900 3.200v5.600H.6z" fill="#fff" stroke="#111" stroke-width="1.150"/><path d="M4.200 .6v2.700h2.700" fill="none" stroke="#111" stroke-width=".9"/></svg><a>Юмор</a></div>
<div class="num" style="left:1170px;width:45px;top:741.0px">28104</div>
<div class="num" style="left:1216px;width:83px;top:741.0px">1231352</div>
<div class="num" style="left:1300px;width:124px;top:735.0px;line-height:13px">25 Авг 2023 15:09:47<br>too Fat to Bat <svg class="arr" width="15.300" height="9" viewBox="0 0 17 10"><path d="M0 4h4.500V1.200L9 5 4.500 8.800V6H0z" fill="#111"/><path d="M10.250 .75h3.500L16.250 3.250v6H10.250z" fill="#fff" stroke="#111" stroke-width="1.300"/><path d="M13.500 .75v2.750h2.750" fill="none" stroke="#111" stroke-width="1"/></svg></div>
<div class="ri" style="top:777px;height:54px"></div><div class="rf" style="top:777px;height:54px"></div><div class="rn" style="top:777px;height:54px;left:1170px;width:45px"></div><div class="rn" style="top:777px;height:54px;left:1216px;width:83px"></div><div class="rn" style="top:777px;height:54px;left:1300px;width:124px"></div>
<svg class="abs" style="left:210px;top:789px" width="37" height="30" viewBox="0 0 37 30"><defs><linearGradient id="fg3" x1="0" y1="1" x2="1" y2="0"><stop offset="0" stop-color="#cfdcf4"/><stop offset=".45" stop-color="#e8f3fd"/><stop offset="1" stop-color="#c6d6f2"/></linearGradient><linearGradient id="fb3" x1="0" y1="0" x2="1" y2="0"><stop offset="0" stop-color="#cdd6f3"/><stop offset="1" stop-color="#a9b2e4"/></linearGradient></defs><path d="M2.200 3.700L29.600 1.300l1 7.300-1.500 15.600L1.700 28.300z" fill="url(#fb3)" stroke="#9ba7cc" stroke-width=".9" stroke-linejoin="round"/><path d="M1.700 28.300L8.900 6.400l7.700-1 2 4.400 16.100-1.700-5.600 16.100z" fill="url(#fg3)" stroke="#8f9cbe" stroke-width="1" stroke-linejoin="round"/></svg>
<div class="ft" style="top:780px">Интернет и Разное</div>
<div class="sl" style="top:808px"><svg class="pg" width="7.500" height="9.500" viewBox="0 0 7.500 9.500"><path d="M.6 .6h3.700L6.900 3.200v5.600H.6z" fill="#fff" stroke="#111" stroke-width="1.150"/><path d="M4.200 .6v2.700h2.700" fill="none" stroke="#111" stroke-width=".9"/></svg><a>Обсуждение провайдеров</a>, <svg class="pg" width="7.500" height="9.500" viewBox="0 0 7.500 9.500"><path d="M.6 .6h3.700L6.900 3.200v5.600H.6z" fill="#fff" stroke="#111" stroke-width="1.150"/><path d="M4.200 .6v2.700h2.700" fill="none" stroke="#111" stroke-width=".9"/></svg><a>Азартные игры</a>, <svg class="pg" width="7.500" height="9.500" viewBox="0 0 7.500 9.500"><path d="M.6 .6h3.700L6.900 3.200v5.600H.6z" fill="#fff" stroke="#111" stroke-width="1.150"/><path d="M4.200 .6v2.700h2.700" fill="none" stroke="#111" stroke-width=".9"/></svg><a>Розыск</a>, <svg class="pg" width="7.500" height="9.500" viewBox="0 0 7.500 9.500"><path d="M.6 .6h3.700L6.900 3.200v5.600H.6z" fill="#fff" stroke="#111" stroke-width="1.150"/><path d="M4.200 .6v2.700h2.700" fill="none" stroke="#111" stroke-width=".9"/></svg><a>Для открывших Интернет</a>, <svg class="pg" width="7.500" height="9.500" viewBox="0 0 7.500 9.500"><path d="M.6 .6h3.700L6.900 3.200v5.600H.6z" fill="#fff" stroke="#111" stroke-width="1.150"/><path d="M4.200 .6v2.700h2.700" fill="none" stroke="#111" stroke-width=".9"/></svg><a>Вебмастеру</a>, <svg class="pg" width="7.500" height="9.500" viewBox="0 0 7.500 9.500"><path d="M.6 .6h3.700L6.900 3.200v5.600H.6z" fill="#fff" stroke="#111" stroke-width="1.150"/><path d="M4.200 .6v2.700h2.700" fill="none" stroke="#111" stroke-width=".9"/></svg><a>Барахолка</a></div>
<div class="num" style="left:1170px;width:45px;top:798.5px">1179</div>
<div class="num" style="left:1216px;width:83px;top:798.5px">34121</div>
<div class="num" style="left:1300px;width:124px;top:792.5px;line-height:13px">11 Авг 2023 18:32:27<br>AlexiSSG <svg class="arr" width="15.300" height="9" viewBox="0 0 17 10"><path d="M0 4h4.500V1.200L9 5 4.500 8.800V6H0z" fill="#111"/><path d="M10.250 .75h3.500L16.250 3.250v6H10.250z" fill="#fff" stroke="#111" stroke-width="1.300"/><path d="M13.500 .75v2.750h2.750" fill="none" stroke="#111" stroke-width="1"/></svg></div>
<div class="ri" style="top:832px;height:59px"></div><div class="rf" style="top:832px;height:59px"></div><div class="rn" style="top:832px;height:59px;left:1170px;width:45px"></div><div class="rn" style="top:832px;height:59px;left:1216px;width:83px"></div><div class="rn" style="top:832px;height:59px;left:1300px;width:124px"></div>
<svg class="abs" style="left:210px;top:847px" width="37" height="30" viewBox="0 0 37 30"><defs><linearGradient id="fg4" x1="0" y1="1" x2="1" y2="0"><stop offset="0" stop-color="#cfdcf4"/><stop offset=".45" stop-color="#e8f3fd"/><stop offset="1" stop-color="#c6d6f2"/></linearGradient><linearGradient id="fb4" x1="0" y1="0" x2="1" y2="0"><stop offset="0" stop-color="#cdd6f3"/><stop offset="1" stop-color="#a9b2e4"/></linearGradient></defs><path d="M2.200 3.700L29.600 1.300l1 7.300-1.500 15.600L1.700 28.300z" fill="url(#fb4)" stroke="#9ba7cc" stroke-width=".9" stroke-linejoin="round"/><path d="M1.700 28.300L8.900 6.400l7.700-1 2 4.400 16.100-1.700-5.600 16.100z" fill="url(#fg4)" stroke="#8f9cbe" stroke-width="1" stroke-linejoin="round"/></svg>
<div class="ft" style="top:835px">Компьютеры и комплектующие</div>
<div class="sl" style="top:863px"><svg class="pg" width="7.500" height="9.500" viewBox="0 0 7.500 9.500"><path d="M.6 .6h3.700L6.900 3.200v5.600H.6z" fill="#fff" stroke="#111" stroke-width="1.150"/><path d="M4.200 .6v2.700h2.700" fill="none" stroke="#111" stroke-width=".9"/></svg><a>Компьютерные новости</a>, <svg class="pg" width="7.500" height="9.500" viewBox="0 0 7.500 9.500"><path d="M.6 .6h3.700L6.900 3.200v5.600H.6z" fill="#fff" stroke="#111" stroke-width="1.150"/><path d="M4.200 .6v2.700h2.700" fill="none" stroke="#111" stroke-width=".9"/></svg><a>Обзоры и тестирование</a>, <svg class="pg" width="7.500" height="9.500" viewBox="0 0 7.500 9.500"><path d="M.6 .6h3.700L6.900 3.200v5.600H.6z" fill="#fff" stroke="#111" stroke-width="1.150"/><path d="M4.200 .6v2.700h2.700" fill="none" stroke="#111" stroke-width=".9"/></svg><a>Системные платы и CPU</a>, <svg class="pg" width="7.500" height="9.500" viewBox="0 0 7.500 9.500"><path d="M.6 .6h3.700L6.900 3.200v5.600H.6z" fill="#fff" stroke="#111" stroke-width="1.150"/><path d="M4.200 .6v2.700h2.700" fill="none" stroke="#111" stroke-width=".9"/></svg><a>Видеокарты и Мониторы</a>, <svg class="pg" width="7.500" height="9.500" viewBox="0 0 7.500 9.500"><path d="M.6 .6h3.700L6.900 3.200v5.600H.6z" fill="#fff" stroke="#111" stroke-width="1.150"/><path d="M4.200 .6v2.700h2.700" fill="none" stroke="#111" stroke-width=".9"/></svg><a>Мультимедиа</a>, <svg class="pg" width="7.500" height="9.500" viewBox="0 0 7.500 9.500"><path d="M.6 .6h3.700L6.900 3.200v5.600H.6z" fill="#fff" stroke="#111" stroke-width="1.150"/><path d="M4.200 .6v2.700h2.700" fill="none" stroke="#111" stroke-width=".9"/></svg><a>Носители информации</a>,</div>
<div class="sl" style="top:877px"><svg class="pg" width="7.500" height="9.500" viewBox="0 0 7.500 9.500"><path d="M.6 .6h3.700L6.900 3.200v5.600H.6z" fill="#fff" stroke="#111" stroke-width="1.150"/><path d="M4.200 .6v2.700h2.700" fill="none" stroke="#111" stroke-width=".9"/></svg><a>Сетевое оборудование</a>, <svg class="pg" width="7.500" height="9.500" viewBox="0 0 7.500 9.500"><path d="M.6 .6h3.700L6.900 3.200v5.600H.6z" fill="#fff" stroke="#111" stroke-width="1.150"/><path d="M4.200 .6v2.700h2.700" fill="none" stroke="#111" stroke-width=".9"/></svg><a>Периферия</a>, <svg class="pg" width="7.500" height="9.500" viewBox="0 0 7.500 9.500"><path d="M.6 .6h3.700L6.900 3.200v5.600H.6z" fill="#fff" stroke="#111" stroke-width="1.150"/><path d="M4.200 .6v2.700h2.700" fill="none" stroke="#111" stroke-width=".9"/></svg><a>Корпуса и питание</a>, <svg class="pg" width="7.500" height="9.500" viewBox="0 0 7.500 9.500"><path d="M.6 .6h3.700L6.900 3.200v5.600H.6z" fill="#fff" stroke="#111" stroke-width="1.150"/><path d="M4.200 .6v2.700h2.700" fill="none" stroke="#111" stroke-width=".9"/></svg><a>Комплексные вопросы</a>, <svg class="pg" width="7.500" height="9.500" viewBox="0 0 7.500 9.500"><path d="M.6 .6h3.700L6.900 3.200v5.600H.6z" fill="#fff" stroke="#111" stroke-width="1.150"/><path d="M4.200 .6v2.700h2.700" fill="none" stroke="#111" stroke-width=".9"/></svg><a>Мобильные ПК</a></div>
<div class="num" style="left:1170px;width:45px;top:856.0px">2860</div>
<div class="num" style="left:1216px;width:83px;top:856.0px">64023</div>
<div class="num" style="left:1300px;width:124px;top:850.0px;line-height:13px">25 Авг 2023 15:03:34<br>Zolotosik <svg class="arr" width="15.300" height="9" viewBox="0 0 17 10"><path d="M0 4h4.500V1.200L9 5 4.500 8.800V6H0z" fill="#111"/><path d="M10.250 .75h3.500L16.250 3.250v6H10.250z" fill="#fff" stroke="#111" stroke-width="1.300"/><path d="M13.500 .75v2.750h2.750" fill="none" stroke="#111" stroke-width="1"/></svg></div>
<div class="ri" style="top:892px;height:59px"></div><div class="rf" style="top:892px;height:59px"></div><div class="rn" style="top:892px;height:59px;left:1170px;width:45px"></div><div class="rn" style="top:892px;height:59px;left:1216px;width:83px"></div><div class="rn" style="top:892px;height:59px;left:1300px;width:124px"></div>
<svg class="abs" style="left:210px;top:907px" width="37" height="30" viewBox="0 0 37 30"><defs><linearGradient id="fg5" x1="0" y1="1" x2="1" y2="0"><stop offset="0" stop-color="#cfdcf4"/><stop offset=".45" stop-color="#e8f3fd"/><stop offset="1" stop-color="#c6d6f2"/></linearGradient><linearGradient id="fb5" x1="0" y1="0" x2="1" y2="0"><stop offset="0" stop-color="#cdd6f3"/><stop offset="1" stop-color="#a9b2e4"/></linearGradient></defs><path d="M2.200 3.700L29.600 1.300l1 7.300-1.500 15.600L1.700 28.300z" fill="url(#fb5)" stroke="#9ba7cc" stroke-width=".9" stroke-linejoin="round"/><path d="M1.700 28.300L8.900 6.400l7.700-1 2 4.400 16.100-1.700-5.600 16.100z" fill="url(#fg5)" stroke="#8f9cbe" stroke-width="1" stroke-linejoin="round"/></svg>
<div class="ft" style="top:895px">Hi-Fi Домашний кинотеатр и Бытовая электроника</div>
<div class="sl" style="top:923px"><svg class="pg" width="7.500" height="9.500" viewBox="0 0 7.500 9.500"><path d="M.6 .6h3.700L6.900 3.200v5.600H.6z" fill="#fff" stroke="#111" stroke-width="1.150"/><path d="M4.200 .6v2.700h2.700" fill="none" stroke="#111" stroke-width=".9"/></svg><a>Поговорим о Hi-Fi</a>, <svg class="pg" width="7.500" height="9.500" viewBox="0 0 7.500 9.500"><path d="M.6 .6h3.700L6.900 3.200v5.600H.6z" fill="#fff" stroke="#111" stroke-width="1.150"/><path d="M4.200 .6v2.700h2.700" fill="none" stroke="#111" stroke-width=".9"/></svg><a>Аудиосистема</a>, <svg class="pg" width="7.500" height="9.500" viewBox="0 0 7.500 9.500"><path d="M.6 .6h3.700L6.900 3.200v5.600H.6z" fill="#fff" stroke="#111" stroke-width="1.150"/><path d="M4.200 .6v2.700h2.700" fill="none" stroke="#111" stroke-width=".9"/></svg><a>Телевизоры и проекторы</a>, <svg class="pg" width="7.500" height="9.500" viewBox="0 0 7.500 9.500"><path d="M.6 .6h3.700L6.900 3.200v5.600H.6z" fill="#fff" stroke="#111" stroke-width="1.150"/><path d="M4.200 .6v2.700h2.700" fill="none" stroke="#111" stroke-width=".9"/></svg><a>Проигрыватели и источники сигнала</a>, <svg class="pg" width="7.500" height="9.500" viewBox="0 0 7.500 9.500"><path d="M.6 .6h3.700L6.900 3.200v5.600H.6z" fill="#fff" stroke="#111" stroke-width="1.150"/><path d="M4.200 .6v2.700h2.700" fill="none" stroke="#111" stroke-width=".9"/></svg><a>Спутниковое и кабельное TV</a>,</div>
<div class="sl" style="top:937px"><svg class="pg" width="7.500" height="9.500" viewBox="0 0 7.500 9.500"><path d="M.6 .6h3.700L6.900 3.200v5.600H.6z" fill="#fff" stroke="#111" stroke-width="1.150"/><path d="M4.200 .6v2.700h2.700" fill="none" stroke="#111" stroke-width=".9"/></svg><a>Видео и Фото</a>, <svg class="pg" width="7.500" height="9.500" viewBox="0 0 7.500 9.500"><path d="M.6 .6h3.700L6.900 3.200v5.600H.6z" fill="#fff" stroke="#111" stroke-width="1.150"/><path d="M4.200 .6v2.700h2.700" fill="none" stroke="#111" stroke-width=".9"/></svg><a>Аксессуары</a>, <svg class="pg" width="7.500" height="9.500" viewBox="0 0 7.500 9.500"><path d="M.6 .6h3.700L6.900 3.200v5.600H.6z" fill="#fff" stroke="#111" stroke-width="1.150"/><path d="M4.200 .6v2.700h2.700" fill="none" stroke="#111" stroke-width=".9"/></svg><a>Бытовая электроника</a></div>
<div class="num" style="left:1170px;width:45px;top:916.0px">225</div>
<div class="num" style="left:1216px;width:83px;top:916.0px">3814</div>
<div class="num" style="left:1300px;width:124px;top:910.0px;line-height:13px">02 Авг 2023 21:01:17<br>hackerhomku <svg class="arr" width="15.300" height="9" viewBox="0 0 17 10"><path d="M0 4h4.500V1.200L9 5 4.500 8.800V6H0z" fill="#111"/><path d="M10.250 .75h3.500L16.250 3.250v6H10.250z" fill="#fff" stroke="#111" stroke-width="1.300"/><path d="M13.500 .75v2.750h2.750" fill="none" stroke="#111" stroke-width="1"/></svg></div>
<div class="cl" style="top:952px;height:33px"></div><div class="cr" style="top:952px;height:33px"></div>
<div class="cbx" style="top:963.5px"></div>
<div class="ct ver" style="top:960.5px">Форум-Трекер: Клубные таланты</div>
<div class="abs" style="right:187px;top:960.5px;font-size:12px;line-height:15px;font-weight:bold;color:#1e4620;white-space:nowrap"><a>Набор "клубных талантов"</a></div>
<div class="ri" style="top:985px;height:55px"></div><div class="rf" style="top:985px;height:55px"></div><div class="rn" style="top:985px;height:55px;left:1170px;width:45px"></div><div class="rn" style="top:985px;height:55px;left:1216px;width:83px"></div><div class="rn" style="top:985px;height:55px;left:1300px;width:124px"></div>
<svg class="abs" style="left:210px;top:998px" width="37" height="30" viewBox="0 0 37 30"><defs><linearGradient id="fg6" x1="0" y1="1" x2="1" y2="0"><stop offset="0" stop-color="#cfdcf4"/><stop offset=".45" stop-color="#e8f3fd"/><stop offset="1" stop-color="#c6d6f2"/></linearGradient><linearGradient id="fb6" x1="0" y1="0" x2="1" y2="0"><stop offset="0" stop-color="#cdd6f3"/><stop offset="1" stop-color="#a9b2e4"/></linearGradient></defs><path d="M2.200 3.700L29.600 1.300l1 7.300-1.500 15.600L1.700 28.300z" fill="url(#fb6)" stroke="#9ba7cc" stroke-width=".9" stroke-linejoin="round"/><path d="M1.700 28.300L8.900 6.400l7.700-1 2 4.400 16.100-1.700-5.600 16.100z" fill="url(#fg6)" stroke="#8f9cbe" stroke-width="1" stroke-linejoin="round"/></svg>
<div class="ft" style="top:988px">Новости и объявления раздела Клубные таланты</div>
<div class="abs" style="left:250px;top:1003px;font-size:10.500px;line-height:13px;color:#555;white-space:nowrap" >Клубные таланты</div>
<div class="sl" style="top:1015px"><svg class="pg" width="7.500" height="9.500" viewBox="0 0 7.500 9.500"><path d="M.6 .6h3.700L6.900 3.200v5.600H.6z" fill="#fff" stroke="#111" stroke-width="1.150"/><path d="M4.200 .6v2.700h2.700" fill="none" stroke="#111" stroke-width=".9"/></svg><a>Объявления</a>, <svg class="pg" width="7.500" height="9.500" viewBox="0 0 7.500 9.500"><path d="M.6 .6h3.700L6.900 3.200v5.600H.6z" fill="#fff" stroke="#111" stroke-width="1.150"/><path d="M4.200 .6v2.700h2.700" fill="none" stroke="#111" stroke-width=".9"/></svg><a>Наши анонсы</a>, <svg class="pg" width="7.500" height="9.500" viewBox="0 0 7.500 9.500"><path d="M.6 .6h3.700L6.900 3.200v5.600H.6z" fill="#fff" stroke="#111" stroke-width="1.150"/><path d="M4.200 .6v2.700h2.700" fill="none" stroke="#111" stroke-width=".9"/></svg><a>Текущие конкурсы</a></div>
<div class="num" style="left:1170px;width:45px;top:1007.0px">46</div>
<div class="num" style="left:1216px;width:83px;top:1007.0px">1299</div>
<div class="num" style="left:1300px;width:124px;top:1001.0px;line-height:13px">17 Ноя 2022 15:13:41<br>Eastoop <svg class="arr" width="15.300" height="9" viewBox="0 0 17 10"><path d="M0 4h4.500V1.200L9 5 4.500 8.800V6H0z" fill="#111"/><path d="M10.250 .75h3.500L16.250 3.250v6H10.250z" fill="#fff" stroke="#111" stroke-width="1.300"/><path d="M13.500 .75v2.750h2.750" fill="none" stroke="#111" stroke-width="1"/></svg></div>
<svg id="wm" class="abs" width="132" height="26" viewBox="0 0 132 26"><text x="1.500" y="21.500" transform="scale(.735 1)" font-family="Liberation Sans,sans-serif" font-weight="bold" font-size="24" fill="#fff" stroke="#555" stroke-width="1.150">N<tspan font-size="33">o</tspan>N<tspan font-size="33">a</tspan>M<tspan font-size="33">e</tspan> C<tspan>l</tspan><tspan font-size="33">u</tspan>b</text></svg>
<div id="botline" class="abs"></div>
</div>
</body>
</html>
